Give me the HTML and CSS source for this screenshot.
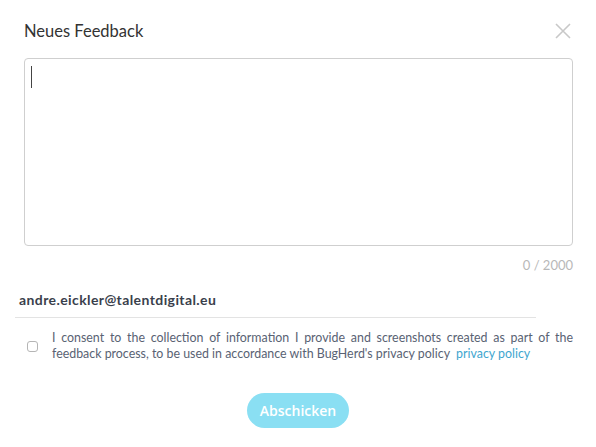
FILE: index.html
```html
<!DOCTYPE html>
<html lang="en">
<head>
    <meta charset="UTF-8">
    <meta name="viewport" content="width=device-width, initial-scale=1.0">
    <title>Neues Feedback</title>
    <link rel="stylesheet" href="styles.css">
</head>
<body>
    <div class="modal">
        <div class="modal-header">
            <h2 class="modal-title">Neues Feedback</h2>
            <button class="close-btn" aria-label="close">
                <svg width="16" height="16" viewBox="0 0 16 16">
                    <path d="M1 1 L15 15 M15 1 L1 15" stroke="#c8c8c8" stroke-width="1.6" fill="none"/>
                </svg>
            </button>
        </div>

        <div class="feedback-box">
            <span class="caret"></span>
        </div>
        <div class="counter">0 / 2000</div>

        <!-- Reporter -->
        <div class="reporter">
            <div class="email">andre.eickler@talentdigital.eu</div>
        </div>

        <label class="consent">
            <span class="checkbox"></span>
            <span class="consent-text">I consent to the collection of information I provide and screenshots created as part of the feedback process, to be used in accordance with BugHerd's privacy policy &nbsp;<a href="#">privacy policy</a></span>
        </label>

        <div class="actions">
            <button class="submit-btn">Abschicken</button>
        </div>
    </div>
</body>
</html>
```

FILE: styles.css
```css
/* Base */
* {
    margin: 0;
    padding: 0;
    box-sizing: border-box;
}

body {
    background: #fff;
    font-family: "Lato", "Noto Sans", sans-serif;
    color: #333;
}

.modal {
    width: 596px;
    height: 447px;
    padding: 0 23px 0 24px;
}

/* Header */
.modal-header {
    display: flex;
    justify-content: space-between;
    align-items: center;
    height: 58px;
    padding-top: 3px;
}

.modal-title {
    font-size: 16.5px;
    font-weight: normal;
    color: #333;
}

.close-btn {
    background: none;
    border: none;
    cursor: pointer;
    margin-right: 2px;
    display: flex;
}

/* Textarea */
.feedback-box {
    height: 188px;
    border: 1px solid #cfcfcf;
    border-radius: 4px;
    padding: 7px 6px;
}

.caret {
    display: block;
    width: 1px;
    height: 22px;
    background: #444;
}

.counter {
    text-align: right;
    font-size: 13px;
    color: #b8b8b8;
    padding-top: 11px;
    height: 45px;
}

/* Reporter */
.reporter {
    margin-left: -9px;
    width: 521px;
    border-bottom: 1px solid #e3e3e3;
    padding: 0 0 9px 4px;
}

.email {
    font-size: 14px;
    font-weight: bold;
    letter-spacing: 0.4px;
    color: #3a3f4c;
}

/* Consent */
.consent {
    display: flex;
    align-items: center;
    gap: 14px;
    margin-top: 12px;
    padding-left: 3px;
}

.checkbox {
    flex: none;
    width: 11px;
    height: 11px;
    border: 1px solid #b5b5b5;
    border-radius: 3px;
}

.consent-text {
    font-size: 12.4px;
    line-height: 16px;
    color: #596273;
    text-align: justify;
}

.consent-text a {
    color: #3ea6cf;
    text-decoration: none;
}

/* Submit */
.actions {
    display: flex;
    justify-content: center;
    margin-top: 31px;
    padding-right: 1px;
}

.submit-btn {
    width: 102px;
    height: 35px;
    border: none;
    border-radius: 18px;
    background: #8adff3;
    color: #fff;
    font-family: "Open Sans", sans-serif;
    font-size: 14px;
    font-weight: 600;
    cursor: pointer;
}
```
